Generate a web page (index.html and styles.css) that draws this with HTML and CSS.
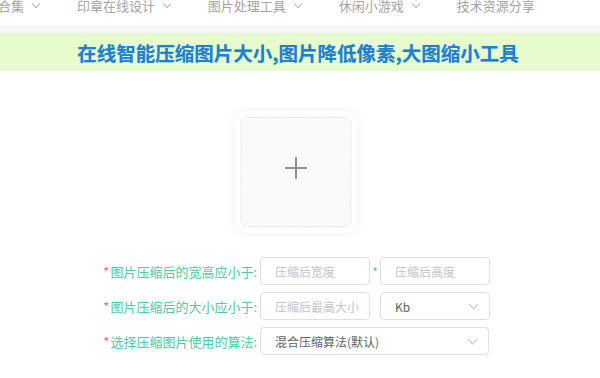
FILE: index.html
```html
<!doctype html>
<html>
<head>
<meta charset="utf-8">
<title>在线智能压缩图片大小</title>
<link rel="stylesheet" href="styles.css">
</head>
<body>
<div class="nav">
    <div class="nav-item first">合集 <i class="arrow"></i></div>
    <div class="nav-item">印章在线设计 <i class="arrow"></i></div>
    <div class="nav-item">图片处理工具 <i class="arrow"></i></div>
    <div class="nav-item">休闲小游戏 <i class="arrow"></i></div>
    <div class="nav-item">技术资源分享</div>
</div>
<div class="gap"></div>
<div class="banner"><h1 class="title">在线智能压缩图片大小,图片降低像素,大图缩小工具</h1></div>

<div class="upload">
    <div class="upload-box"><span class="plus"></span></div>
</div>

<div class="form">
    <div class="row">
        <label class="label"><b>*</b>图片压缩后的宽高应小于:</label>
        <div class="input"><span class="ph">压缩后宽度</span></div>
        <b class="star">*</b>
        <div class="input"><span class="ph">压缩后高度</span></div>
    </div>
    <div class="row">
        <label class="label"><b>*</b>图片压缩后的大小应小于:</label>
        <div class="input"><span class="ph">压缩后最高大小</span></div>
        <div class="input select"><span class="val">Kb</span><i class="arrow"></i></div>
    </div>
    <div class="row">
        <label class="label"><b>*</b>选择压缩图片使用的算法:</label>
        <div class="input select wide"><span class="val">混合压缩算法(默认)</span><i class="arrow"></i></div>
    </div>
</div>
</body>
</html>
```

FILE: styles.css
```css
body { margin: 0; font-family: "Noto Sans CJK SC", "Liberation Sans", sans-serif; color: #606266; background: #fff; }

.nav { display: flex; height: 29px; margin-top: -2px; border-bottom: 1px solid #eee; box-sizing: border-box; font-size: 13px; line-height: 15px; color: #a3a3a3; }
.nav-item { margin-right: 38px; white-space: nowrap; }
.nav-item.first { margin-left: -2px; }
.nav .arrow { margin-left: 6px; }

.arrow { display: inline-block; width: 5px; height: 5px; border-right: 1px solid #b5b5b5; border-bottom: 1px solid #b5b5b5; transform: rotate(45deg); vertical-align: 4px; }

.gap { height: 6px; background: #f5f5f5; }
.banner { background: #e6fccf; height: 38px; display: flex; align-items: center; justify-content: center; }
.title { margin: 0 0 0 -4px; font-size: 19.5px; font-weight: bold; color: #1f7fd0; text-shadow: 0 0 1px rgba(31,127,208,.35); }

.upload { display: flex; justify-content: center; padding: 40px 8px 24px 0; }
.upload-box { width: 110px; height: 110px; margin: 6px; border: 1px dashed #e3e3e3; border-radius: 6px; background: #fafafa; box-sizing: border-box; box-shadow: 0 0 0 6px #fff, 0 0 8px 6px rgba(0,0,0,.07); display: flex; align-items: center; justify-content: center; }
.plus { position: relative; width: 22px; height: 22px; margin-top: -8px; }
.plus:before, .plus:after { content: ""; position: absolute; background: #8c939d; }
.plus:before { left: 0; right: 0; top: 10px; height: 1.5px; }
.plus:after { top: 0; bottom: 0; left: 10px; width: 1.5px; }

.form { display: flex; flex-direction: column; gap: 7px; }
.row { display: flex; align-items: center; height: 28px; }
.label { width: 260px; text-align: right; font-size: 13px; color: #4fc9a6; padding-right: 3px; box-sizing: border-box; }
.label b { color: #f56c6c; font-weight: normal; margin-right: 1px; }
.star { color: #4fc9a6; font-weight: normal; font-size: 12px; width: 10px; text-align: center; }
.input { width: 110px; height: 28px; border: 1px solid #dcdfe6; border-radius: 4px; box-sizing: border-box; padding: 0 10px 0 14px; display: flex; align-items: center; font-size: 12px; white-space: nowrap; }
.row .select { margin-left: 10px; }
.row .select.wide { margin-left: 0; width: 229px; }
.ph { color: #c0c4cc; }
.val { color: #606266; flex: 1; }
.select .arrow { border-color: #c0c4cc; width: 6px; height: 6px; vertical-align: 0; margin-top: -4px; margin-right: 2px; }
```
